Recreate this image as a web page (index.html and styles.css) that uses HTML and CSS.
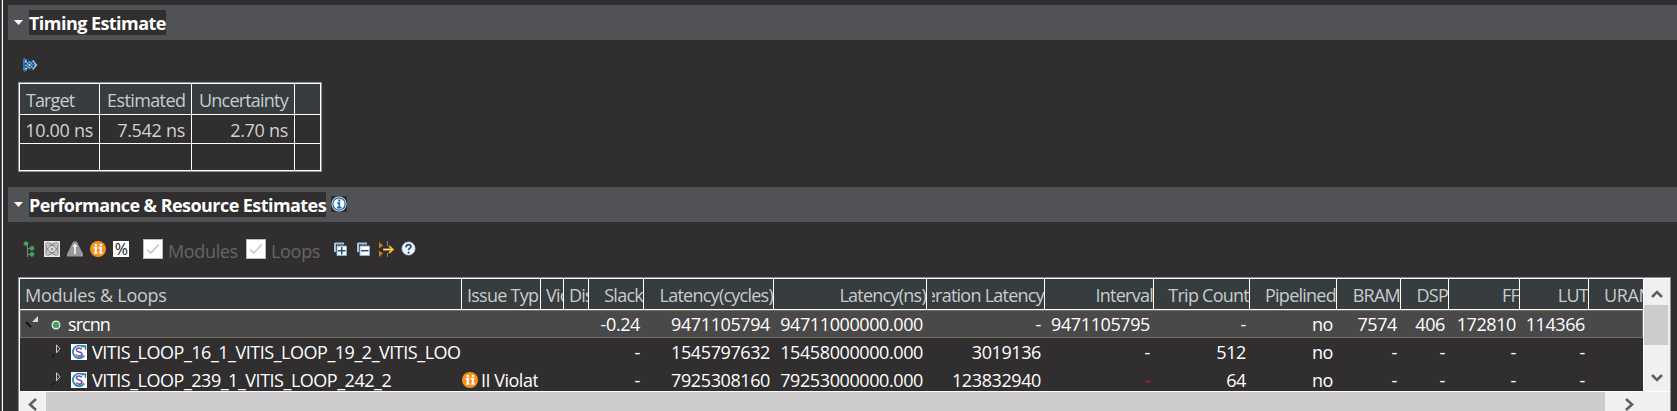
FILE: index.html
```html
<!DOCTYPE html>
<html lang="en">
<head>
<meta charset="utf-8">
<title>Synthesis Summary</title>
<link rel="stylesheet" href="styles.css">
</head>
<body>
<svg class="defs" width="0" height="0">
  <symbol id="ii" viewBox="0 0 16 16"><circle cx="8" cy="8" r="8" fill="#f7931e"/><path d="M3.600 6.800h2.600L5.300 11.800h2M8.600 6.800h2.600l-.9 5h2.200" stroke="#fff" stroke-width="1.900" fill="none"/><path d="M4.700 3h2.200v2H4.700zM9.800 3H12v2H9.800z" fill="#fff"/></symbol>
  <symbol id="loop" viewBox="0 0 16 16"><path fill="#fff" d="M0 0h16v16H0z"/><path d="M12.500 3.200A6.300 6.300 0 1 0 13.300 11.500" fill="none" stroke="#1f87a0" stroke-width="1.700"/><path d="M10.500 1.200h4.800v4.600h-1.600V3h-3.200z" fill="#1f87a0"/><path d="M10.800 5.400C9.800 3.400 5.400 3.600 5.400 5.900c0 2.500 5.600 1.600 5.600 4.300 0 2.400-4.700 2.600-5.900.3" fill="none" stroke="#7b4bb0" stroke-width="1.600"/></symbol>
  <symbol id="info" viewBox="0 0 16 16"><circle cx="8" cy="8" r="7.500" fill="#fff"/><circle cx="8" cy="8" r="6.200" fill="#f6fbff" stroke="#135a9e" stroke-width="1.200"/><path d="M6.300 7.200H8.300V11.500M6 11.600h4.500" stroke="#1b66ad" stroke-width="1.700" fill="none"/><path d="M7.200 3.500h2.200v2H7.200z" fill="#1b66ad"/></symbol>
</svg>
<div class="view">
  <section class="timing">
    <header class="band">
      <svg class="twist" viewBox="0 0 9 5"><path d="M0 0h9L4.500 5z" fill="#fff"/></svg>
      <h2 class="t-timing">Timing Estimate</h2>
    </header>
    <div class="tools1">
      <svg width="16" height="16" viewBox="0 0 16 16"><path d="M2 2.500h3v9H2z" fill="#eaf4fb"/><path d="M5 1.500H1.500v11H5M2.500 0v14" stroke="#3877b8" fill="none"/><path d="M10.500 2.500L14 7l-3.500 4.500" stroke="#a6cbea" stroke-width="2" fill="none"/><circle cx="7.500" cy="7" r="4" fill="#8dbbe2" stroke="#16518d" stroke-width="2" stroke-dasharray="2.400 .7"/><circle cx="7.500" cy="7" r="1.700" fill="#cfe3f4" stroke="#073a70"/></svg>
    </div>
    <div class="tbl1">
      <div class="th"><span class="h-target">Target</span></div><div class="th"><span class="h-est">Estimated</span></div><div class="th"><span class="h-unc">Uncertainty</span></div><div class="th"></div>
      <div>10.00 ns</div><div>7.542 ns</div><div>2.70 ns</div><div></div>
      <div></div><div></div><div></div><div></div>
    </div>
  </section>
  <section class="perf">
    <header class="band">
      <svg class="twist" viewBox="0 0 9 5"><path d="M0 0h9L4.500 5z" fill="#fff"/></svg>
      <h2 class="t-perf">Performance &amp; Resource Estimates</h2>
      <svg class="info" width="16" height="16"><use href="#info"/></svg>
    </header>
    <div class="tools2">
      <svg width="16" height="16" viewBox="-2 0 16 16"><path d="M4.500 3v13M4.500 7.500H9M4.500 13.500H9" stroke="#77839a" fill="none"/><g fill="#4da467" stroke="#2e8548" stroke-width=".7"><circle cx="3" cy="2.600" r="2.200"/><circle cx="9" cy="7.300" r="2.200"/><circle cx="9" cy="13.300" r="2.200"/></g></svg>
      <svg width="16" height="16" viewBox="0 0 16 16"><path fill="#e7e7e7" d="M0 0h16v16H0z"/><g fill="none" stroke="#858585" stroke-width="1"><ellipse cx="8" cy="8" rx="8" ry="3.500" transform="rotate(45 8 8)"/><ellipse cx="8" cy="8" rx="8" ry="3.500" transform="rotate(-45 8 8)"/><path d="M2 8c0-4 3-5 6-3 3-2 6-1 6 3s-3 5-6 3c-3 2-6 1-6-3"/></g><circle cx="8" cy="8" r="1.500" fill="#999"/></svg>
      <svg width="16" height="16" viewBox="0 0 16 16"><path d="M5.700 1.500Q8-1 10.300 1.500L16 13v2.500H0V13z" fill="#999"/><path d="M8 3v10M6 5h4" stroke="#fff" stroke-width="1.500"/></svg>
      <svg width="16" height="16"><use href="#ii"/></svg>
      <span class="pct">%</span>
      <span class="box b1"><svg viewBox="0 0 20 20"><path d="M3.500 10.500l4 4L16.500 5" stroke="#c6c6c6" stroke-width="1.700" fill="none"/></svg></span>
      <span class="lab l1">Modules</span>
      <span class="box b2"><svg viewBox="0 0 20 20"><path d="M3.500 10.500l4 4L16.500 5" stroke="#c6c6c6" stroke-width="1.700" fill="none"/></svg></span>
      <span class="lab l2">Loops</span>
      <svg width="16" height="16" viewBox="0 0 16 16"><path d="M2 2.500h9M2 2v9" stroke="#a8c2dc" stroke-width="2" fill="none"/><path d="M4 5h9.500v9.500H4z" fill="#fff" stroke="#8facc9"/><path d="M5 9.700h7.500M8.700 6v7.500" stroke="#135184" stroke-width="1.500"/></svg>
      <svg width="16" height="16" viewBox="0 0 16 16"><path d="M2 2.500h9M2 2v9" stroke="#a8c2dc" stroke-width="2" fill="none"/><path d="M4 5h9.500v9.500H4z" fill="#fff" stroke="#8facc9"/><path d="M5 9.700h7.500" stroke="#135184" stroke-width="1.500"/></svg>
      <svg class="i-arrow" width="16" height="16" viewBox="0 0 16 16"><path d="M0 1l4 3.500L0 7.500zM0 9.500l4 3L0 16z" fill="#c97e24"/><path d="M8.500 0v5M8.500 12v4" stroke="#7d8797"/><path d="M4 8.500h9M10 5l4 3.500-4 3.500" stroke="#f3ae33" stroke-width="1.800" fill="none"/><path d="M5 8.500h8" stroke="#fff0b0" stroke-width=".8"/></svg>
      <svg width="16" height="16" viewBox="0 0 16 16"><circle cx="7.500" cy="7.500" r="6.500" fill="#f1f6fc" stroke="#b7c7df"/><path d="M5 6.200C5 2.500 10.200 3 10 5.700 9.800 7.300 7.600 7.200 7.600 9M7.600 10.500v2" stroke="#2a4a7f" stroke-width="1.800" fill="none"/></svg>
    </div>
    <div class="tbl2">
      <div class="main">
        <div class="row head">
          <div class="name"><span>Modules &amp; Loops</span></div><div class="left"><span>Issue Typ</span></div><div class="left"><span>Vio</span></div><div class="left"><span>Dis</span></div><div><span>Slack</span></div><div><span>Latency(cycles)</span></div><div><span>Latency(ns)</span></div><div class="iter"><span>eration Latency</span></div><div><span>Interval</span></div><div><span>Trip Count</span></div><div><span>Pipelined</span></div><div><span>BRAM</span></div><div><span>DSP</span></div><div><span>FF</span></div><div><span>LUT</span></div><div class="uram"><span>URAM</span></div>
        </div>
        <div class="row sel">
          <div class="name"><svg class="open" width="14" height="14" viewBox="0 0 14 14"><path d="M13 0v6H7z" fill="#d8d8d8"/><path d="M1 6l5 5" stroke="#111" stroke-width="1.800"/></svg><svg class="dot" width="10" height="10" viewBox="0 0 10 10"><circle cx="5" cy="5" r="3.900" fill="#45a162" stroke="#e6f6e9" stroke-width="1.200"/></svg><span class="n0">srcnn</span></div>
          <div></div><div></div><div></div><div>-0.24</div><div>9471105794</div><div>94711000000.000</div><div>-</div><div>9471105795</div><div>-</div><div>no</div><div>7574</div><div>406</div><div>172810</div><div>114366</div><div class="zero">0</div>
        </div>
        <div class="row">
          <div class="name"><svg class="closed" width="10" height="14" viewBox="0 0 10 14"><path d="M5.500.8v8L9 4.800z" fill="none" stroke="#ccc"/><path d="M1 13l3-3" stroke="#191919" stroke-width="1.500"/></svg><svg class="lp" width="16" height="16"><use href="#loop"/></svg><span class="n1">VITIS_LOOP_16_1_VITIS_LOOP_19_2_VITIS_LOO</span></div>
          <div></div><div></div><div></div><div>-</div><div>1545797632</div><div>15458000000.000</div><div>3019136</div><div>-</div><div>512</div><div>no</div><div>-</div><div>-</div><div>-</div><div>-</div><div></div>
        </div>
        <div class="row last">
          <div class="name"><svg class="closed" width="10" height="14" viewBox="0 0 10 14"><path d="M5.500.8v8L9 4.800z" fill="none" stroke="#ccc"/><path d="M1 13l3-3" stroke="#191919" stroke-width="1.500"/></svg><svg class="lp" width="16" height="16"><use href="#loop"/></svg><span class="n1">VITIS_LOOP_239_1_VITIS_LOOP_242_2</span></div>
          <div class="issue"><svg width="16" height="16"><use href="#ii"/></svg><span class="viol">II Violat</span></div><div></div><div></div><div>-</div><div>7925308160</div><div>79253000000.000</div><div>123832940</div><div class="red">-</div><div>64</div><div>no</div><div>-</div><div>-</div><div>-</div><div>-</div><div></div>
        </div>
      </div>
      <div class="vbar">
        <svg width="12" height="8" viewBox="0 0 12 8"><path d="M1 7l5-5 5 5" fill="none" stroke="#606060" stroke-width="2.600"/></svg>
        <i></i>
        <svg width="12" height="8" viewBox="0 0 12 8"><path d="M1 1l5 5 5-5" fill="none" stroke="#606060" stroke-width="2.600"/></svg>
      </div>
      <div class="hbar">
        <svg width="9" height="13" viewBox="0 0 9 13"><path d="M8 1L2 6.500 8 12" fill="none" stroke="#606060" stroke-width="2.600"/></svg>
        <i></i>
        <svg width="9" height="13" viewBox="0 0 9 13"><path d="M1 1l6 5.500L1 12" fill="none" stroke="#606060" stroke-width="2.600"/></svg>
      </div>
    </div>
  </section>
</div>
</body>
</html>
```
FILE: styles.css
```css
* { box-sizing: border-box; }
body { margin: 0; background: #312e2f; color: #fff; font: 18px/28px "Open Sans", "Noto Sans", sans-serif; overflow: hidden; }
svg { display: block; flex: none; }
.defs { position: absolute; }
.view { height: 411px; overflow: hidden; border-left: 1px solid #55595b; margin-left: 1px; box-shadow: inset 1px 0 #fff; padding: 5px 0 0 7px; }
.band { height: 35px; background: #515256; display: flex; align-items: flex-start; padding-left: 5px; margin-left: -1px; }
.twist { width: 9px; height: 5px; margin: 15px 6px 0 1px; }
h2 { margin: 5px 0 0; height: 25px; background: #312e2f; font: 700 18px/27px "Open Sans", sans-serif; white-space: nowrap; }
.t-timing { width: 137px; letter-spacing: -0.55px; }
.t-perf { width: 297px; letter-spacing: -0.56px; }
.info { margin: 9px 0 0 5px; background: #312e2f; }
.timing { height: 182px; }
.tools1 { padding: 18px 0 0 13px; height: 42px; }
.tbl1 { margin-left: 9px; width: 304px; height: 90px; border: 1px solid #8c9196; outline: 1px solid #fff; outline-offset: -2px; padding: 1px; display: grid; grid-template-columns: 80px 92px 103px 25px; grid-template-rows: 31px 29px 26px; color: #d2d2d2; }
.tbl1 > div { border-right: 1px solid #fff; border-bottom: 1px solid #fff; text-align: right; padding: 2px 6px 0 0; line-height: 26px; letter-spacing: -0.3px; white-space: nowrap; overflow: hidden; }
.tbl1 > div:nth-child(4n) { border-right: 0; }
.tbl1 > div:nth-child(n+9) { border-bottom: 0; }
.tbl1 .th { background: #373c3f; text-align: left; padding: 3px 0 0 6px; color: #c8cccd; }
.tbl1 .th + .th { padding-left: 7px; }
.h-target { letter-spacing: -0.9px; }
.h-est { letter-spacing: -0.6px; }
.h-unc { letter-spacing: -0.8px; }
.tools2 { height: 55px; display: flex; align-items: flex-start; padding: 19px 0 0 12px; }
.tools2 > svg { margin-right: 7px; }
.tools2 > .i-arrow { margin-right: 6px; }
.pct { width: 16px; height: 16px; background: #fff; color: #222; font: 16px/16px "Open Sans", sans-serif; text-align: center; letter-spacing: -1px; text-indent: -.5px; }
.box { width: 20px; height: 20px; border: 1px solid #bcbcbc; background: #fff; margin-top: -2px; }
.b1 { margin-left: 14px; }
.b2 { margin-left: 8px; }
.lab { color: #656565; line-height: 24px; margin: -2px 0 0 5px; white-space: nowrap; }
.l1 { width: 70px; letter-spacing: -0.35px; }
.l2 { width: 50px; margin-right: 12px; letter-spacing: -0.3px; }
.tbl2 { margin-left: 9px; width: 1653px; height: 140px; border: 1px solid #8c9196; border-bottom: 0; box-shadow: inset 1px 1px #fff; padding: 1px 1px 0; display: grid; grid-template-columns: 1623px 26px 1px; grid-template-rows: 112px 26px; background: #f0eff1; }
.main { background: #312e2f; overflow: hidden; }
.row { display: grid; grid-template-columns: 442px 79px 23px 25px 55px 130px 153px 118px 109px 96px 87px 64px 48px 71px 69px 54px; height: 28px; letter-spacing: -0.4px; }
.row > div { text-align: right; padding-right: 4px; line-height: 29px; white-space: nowrap; overflow: hidden; }
.head { height: 31px; background: #373c3f; color: #c8cccd; border-bottom: 1px solid #fff; letter-spacing: -0.75px; }
.head > div { border-right: 1px solid #fff; padding: 3px 0 0; line-height: 27px; }
.head > div:last-child { border: 0; }
.head .left { text-align: left; padding-left: 5px; }
.head .name { text-align: left; padding-left: 5px; letter-spacing: -0.25px; }
.head .iter { display: flex; justify-content: flex-end; margin-left: 5px; }
.head .uram { text-align: left; padding-left: 15px; letter-spacing: -0.4px; }
.row .name { text-align: left; }
.sel { background: #4a494a; box-shadow: inset 0 0 0 1px #766f60; }
.row:not(.head) .name { display: flex; padding: 0; }
.open { margin: 6px 0 0 5px; }
.dot { margin: 10px 7px 0 12px; }
.n0 { letter-spacing: -0.95px; }
.n1 { letter-spacing: -0.48px; }
.closed { margin: 6px 0 0 31px; }
.lp { margin: 6px 5px 0 10px; }
.row .issue { display: flex; padding: 0 2px 0 0; }
.issue svg { margin: 6px 3px 0 0; }
.viol { overflow: hidden; letter-spacing: -0.5px; }
.red { color: #e00f0f; }
.row .zero { color: #3868a8; padding: 0; margin-right: -9px; }
.last { height: 25px; }
.main + .vbar { border-left: 1px solid #fff; height: 112px; }
.vbar { display: flex; flex-direction: column; background: #f0eff1; }
.vbar svg { margin: 11px 0 7px 7px; }
.vbar i { height: 40px; width: 24px; background: #cdcbcd; }
.vbar i + svg { margin-top: 29px; }
.hbar { grid-column: 1 / 4; display: flex; background: #f0eff1; border-top: 1px solid #fff; }
.hbar svg { margin: 6px 9px 0 8px; }
.hbar i { width: 1559px; background: #cdcbcd; }
.hbar i + svg { margin-left: 20px; }
```
